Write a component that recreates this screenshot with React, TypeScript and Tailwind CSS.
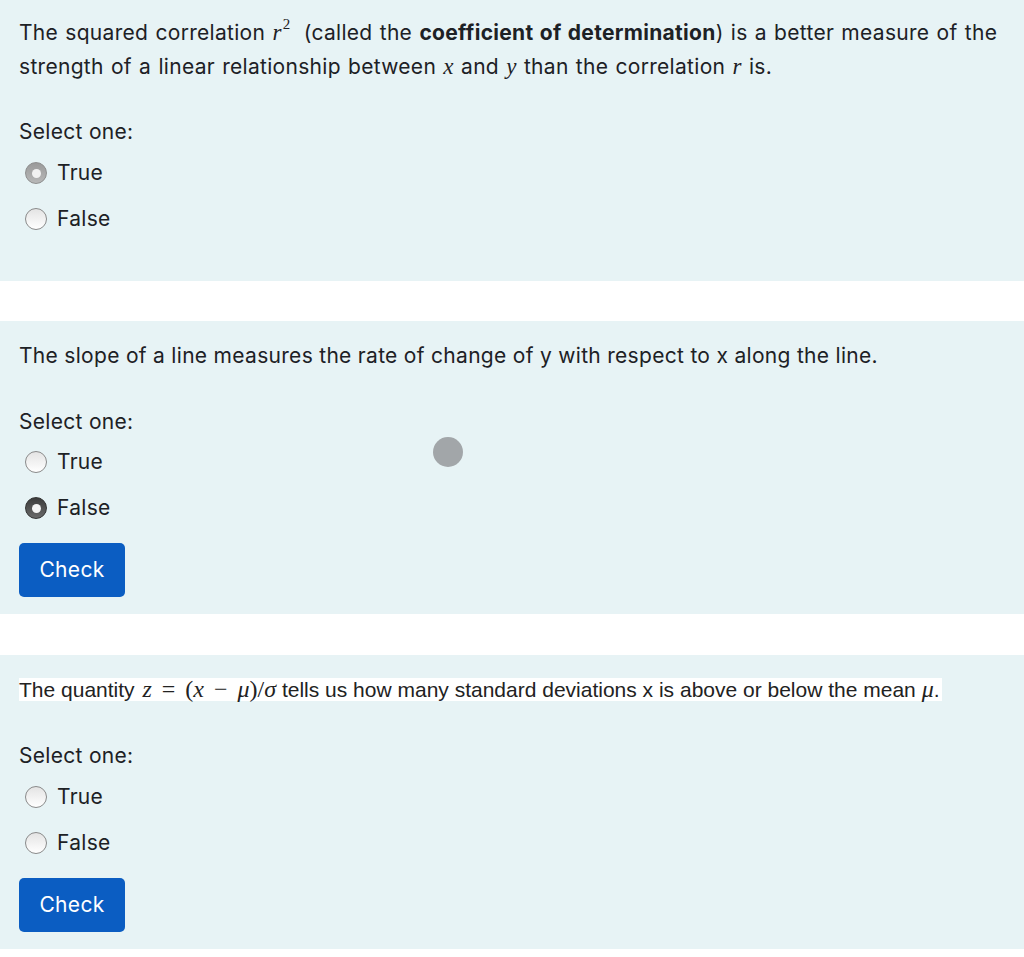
import React from "react";

type RadioState = "off" | "onGray" | "onDark";

const Radio = ({ state }: { state: RadioState }) => {
  if (state === "onGray") {
    return (
      <span className="w-[22px] h-[22px] rounded-full bg-gradient-to-b from-[#9a9a9a] to-[#b8b8b8] border border-[#8e8e8e] flex items-center justify-center">
        <span className="w-[9px] h-[9px] rounded-full bg-[#f2f2f2]" />
      </span>
    );
  }
  if (state === "onDark") {
    return (
      <span className="w-[22px] h-[22px] rounded-full bg-gradient-to-b from-[#3c3c3c] to-[#6a6a6a] border border-[#333] flex items-center justify-center">
        <span className="w-[9px] h-[9px] rounded-full bg-[#f4f4f4]" />
      </span>
    );
  }
  return (
    <span className="w-[22px] h-[22px] rounded-full bg-gradient-to-b from-[#e4e4e4] to-[#ffffff] border border-[#8a8a8a]" />
  );
};

const Option = ({ label, state }: { label: string; state: RadioState }) => (
  <div className="flex items-center h-[46px] pl-[6px]">
    <Radio state={state} />
    <span className="ml-[10px]">{label}</span>
  </div>
);

const Mi = ({ children, size }: { children: React.ReactNode; size?: string }) => (
  <span className={"italic " + (size ?? "")} style={{ fontFamily: '"Liberation Serif", serif' }}>
    {children}
  </span>
);

const CheckBtn = () => (
  <button className="mt-[12px] w-[106px] h-[54px] rounded-[5px] bg-[#0b5dc2] text-white text-[21px]">
    Check
  </button>
);

export default function App() {
  return (
    <div
      className="bg-white text-[#1d2125] text-[21px] tracking-[0.3px] relative w-[1024px] h-[957px]"
      style={{ fontFamily: 'Inter, "Noto Sans", sans-serif' }}
    >
      {/* question 1 */}
      <div className="bg-[#e7f3f5] h-[281px] px-[19px] pt-[16px]">
        <p className="leading-[34px] [word-spacing:1px]">
          The squared correlation{" "}
          <span className="inline-block">
            <Mi size="text-[23px]">r</Mi>
            <span
              className="inline-block text-[15px] align-top -mt-[2px] ml-[1px] leading-[20px]"
              style={{ fontFamily: '"Liberation Serif", serif' }}
            >
              2
            </span>
          </span>
          {"  "}
          <span className="ml-[6px]">(called the</span> <b>coefficient of determination</b>) is a better
          measure of the strength of a linear relationship between <Mi size="text-[23px]">x</Mi> and{" "}
          <Mi size="text-[23px]">y</Mi> than the correlation <Mi size="text-[23px]">r</Mi> is.
        </p>
        <div className="mt-[33px] leading-[30px]">Select one:</div>
        <div className="mt-[3px]">
          <Option label="True" state="onGray" />
          <Option label="False" state="off" />
        </div>
      </div>

      <div className="h-[40px]" />

      {/* question 2 */}
      <div className="bg-[#e7f3f5] h-[293px] px-[19px] pt-[18px]">
        <p className="leading-[34px]">
          The slope of a line measures the rate of change of y with respect to x along the line.
        </p>
        <div className="mt-[34px] leading-[30px]">Select one:</div>
        <div className="mt-[2px]">
          <Option label="True" state="off" />
          <Option label="False" state="onDark" />
        </div>
        <CheckBtn />
      </div>

      <div className="h-[41px]" />

      {/* question 3 */}
      <div className="bg-[#e7f3f5] h-[294px] px-[19px] pt-[22px]">
        <p
          className="leading-[26px] text-[21px] tracking-normal"
          style={{ fontFamily: '"Liberation Sans", Arial, sans-serif' }}
        >
          <span className="bg-white pr-[2px] text-[#222]">
            The quantity{" "}
            <span className="text-[24px] ml-[2px] leading-none" style={{ fontFamily: '"Liberation Serif", serif' }}>
              <i>z</i>
              <span className="mx-[10px]">=</span>(<i>x</i>
              <span className="mx-[10px]">−</span>
              <i>μ</i>)/<i>σ</i>
            </span>{" "}
            tells us how many standard deviations x is above or below the mean{" "}
            <Mi size="text-[24px] leading-none">μ</Mi>.
          </span>
        </p>
        <div className="mt-[38px] leading-[30px]">Select one:</div>
        <div className="mt-[3px]">
          <Option label="True" state="off" />
          <Option label="False" state="off" />
        </div>
        <CheckBtn />
      </div>

      {/* touch indicator */}
      <span className="absolute left-[433px] top-[437px] w-[30px] h-[30px] rounded-full bg-[#a2a6a9]" />
    </div>
  );
}
